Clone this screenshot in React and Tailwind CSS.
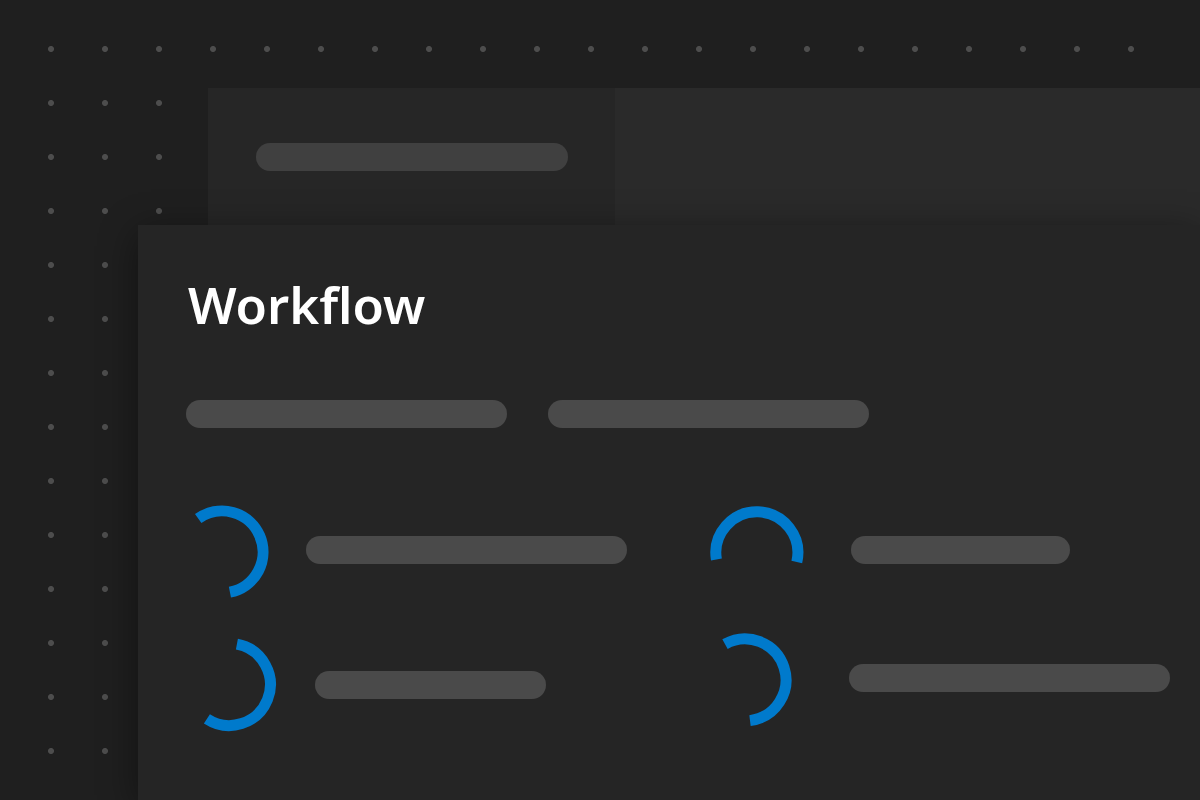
function Bar({ className }) {
  return <div className={`h-7 shrink-0 rounded-full ${className}`} />;
}

function Ring({ d }) {
  return (
    <svg
      className="size-[94px] shrink-0"
      viewBox="-47 -47 94 94"
      fill="none"
      stroke="#007acc"
      strokeWidth="11"
      aria-hidden="true"
    >
      <path d={d} />
    </svg>
  );
}

export default function App() {
  return (
    <main className="relative flex min-h-screen flex-col overflow-hidden bg-[#1f1f1f] pt-[88px] font-['Noto_Sans','Open_Sans',sans-serif]">
      <div className="absolute top-[22px] right-[42px] bottom-[22px] left-6 bg-[radial-gradient(circle,#4d4d4d_2.5px,transparent_3.5px)] bg-[size:54px_54px]" />

      <section className="relative ml-[208px] flex h-[137px] bg-[#2a2a2a]">
        <div className="w-[407px] bg-[#262626] px-12 pt-[55px]">
          <Bar className="w-[312px] bg-[#404040]" />
        </div>
      </section>

      <section className="relative ml-[138px] flex-1 bg-[#252525] pt-[43px] shadow-[0_8px_36px_rgba(0,0,0,0.45)]">
        <h1 className="px-[50px] text-[51px] leading-[72px] font-semibold text-white [font-variant-ligatures:none]">
          Workflow
        </h1>

        <div className="mt-[60px] flex gap-[41px] px-12">
          <Bar className="w-[321px] bg-[#4a4a4a]" />
          <Bar className="w-[321px] bg-[#4a4a4a]" />
        </div>

        <div className="mt-[77px] grid grid-cols-[523px_1fr] pl-[37px]">
          <div className="flex flex-col gap-[39px]">
            <div className="flex items-center gap-[37px]">
              <Ring d="M-23.8-33.4A41 41 0 1 1 7.9 40.2" />
              <Bar className="mb-1 w-[321px] bg-[#4a4a4a]" />
            </div>
            <div className="flex items-center gap-[38px] pl-2">
              <Ring d="M6.9-40.8A41 41 0 1 1-23.1 33.8" />
              <Bar className="w-[231px] bg-[#4a4a4a]" />
            </div>
          </div>
          <div className="flex flex-col gap-[34px]">
            <div className="flex items-center gap-[47px] pl-3">
              <Ring d="M-40.6 7.5A41 41 0 1 1 39.8 10" />
              <Bar className="mb-1 w-[219px] bg-[#4a4a4a]" />
            </div>
            <div className="flex items-center gap-[57px]">
              <Ring d="M-20-35.9A41 41 0 1 1 5 40.6" />
              <Bar className="mb-1 w-[321px] bg-[#4a4a4a]" />
            </div>
          </div>
        </div>
      </section>
    </main>
  );
}
